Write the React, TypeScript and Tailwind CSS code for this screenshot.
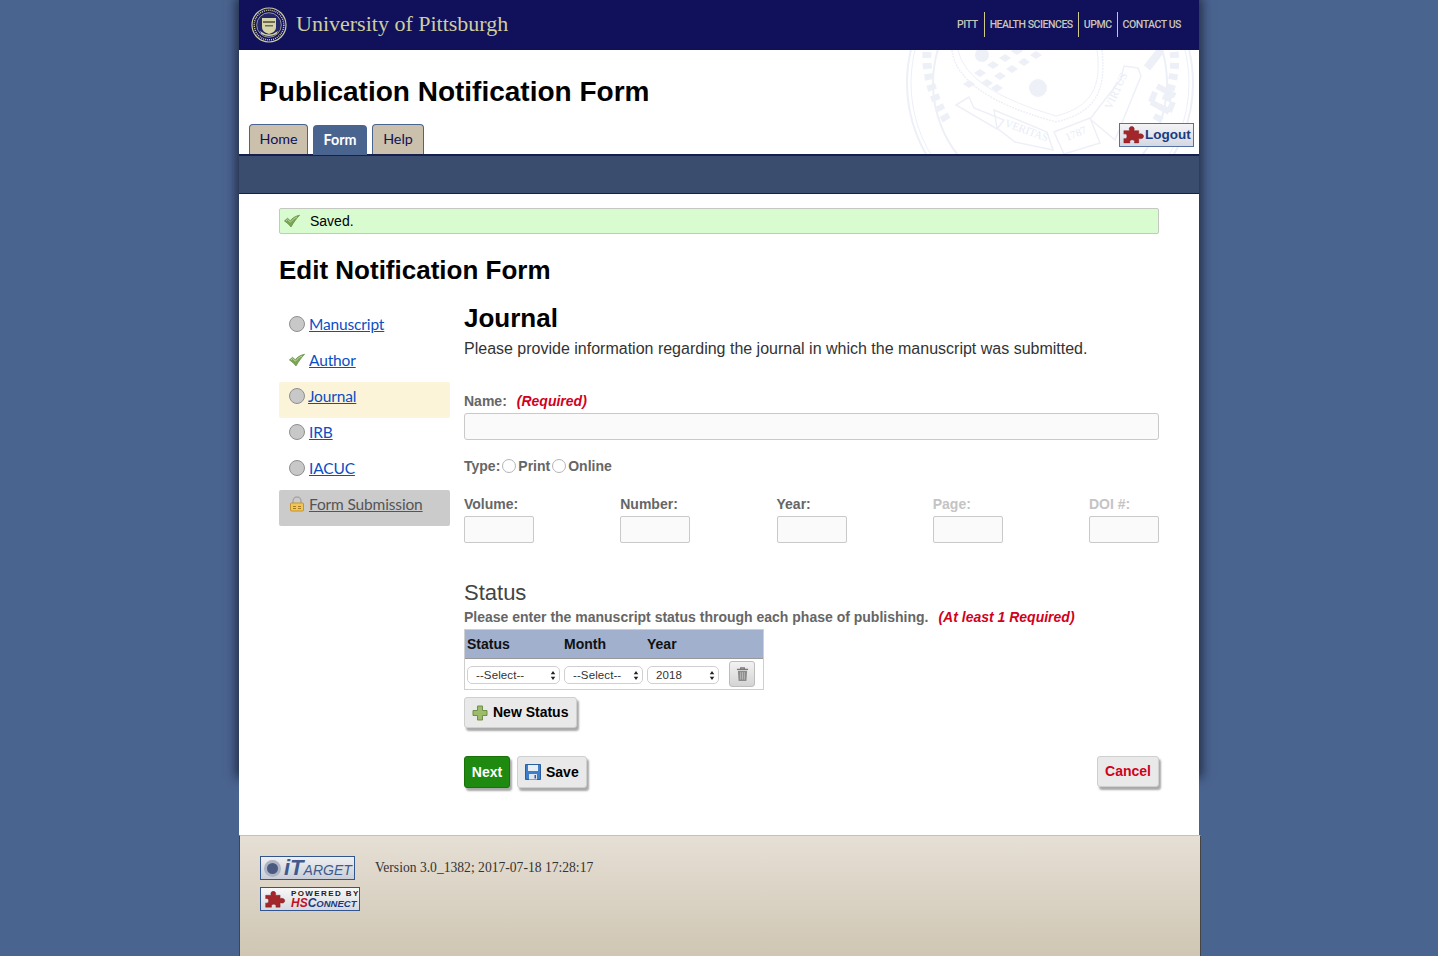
import React from "react";

const Puzzle = ({ className }: { className?: string }) => (
  <svg viewBox="0 0 24 20" className={className}>
    <path d="M1 5h6.500c-1.200-3 .6-4.600 2.500-4.600s3.700 1.600 2.500 4.600H18v4c3-1.200 5.500.3 5.500 2.500S21 15 18 13.800V19h-5c1-2.500-.7-3.500-2.500-3.500S7 16.500 8 19H1v-5c2.500 1 3.500-.7 3.500-2.500S3.500 8 1 9z" fill="#a3262b" stroke="#7c1a1e" strokeWidth=".5" />
  </svg>
);

const Check = ({ className }: { className?: string }) => (
  <svg viewBox="0 0 16 14" className={className}>
    <path d="M.4 6.900 3.600 4.300l2.600 2.400C8.500 4 11.500 2 15.600 1.200 12.500 4.500 9.500 8.500 7 13 5 10.500 3 8.500.4 6.900z" fill="#7aa653" stroke="#55803a" strokeWidth=".6" />
    <path d="M2 6.800 3.600 5.500l2.800 2.600C8.500 5.800 10.500 4 13 3" fill="none" stroke="#bfdc9f" strokeWidth=".9" />
  </svg>
);

const GreyDot = () => (
  <span className="w-4 h-4 rounded-full bg-[#c8c8c8] border border-[#8f8f8f] shrink-0" />
);

const Seal = () => (
  <svg viewBox="0 0 36 36" className="w-9 h-9">
    <circle cx="18" cy="18" r="17" fill="#10115a" stroke="#cfcda0" strokeWidth="1.200" />
    <circle cx="18" cy="18" r="14.800" fill="none" stroke="#cfcda0" strokeWidth="1.500" strokeDasharray="1 1" />
    <circle cx="18" cy="18" r="12.300" fill="#24266a" stroke="#cfcda0" strokeWidth=".7" />
    <path d="M11 11h14v9c0 4-3.500 6-7 7-3.500-1-7-3-7-7z" fill="#d6d4a6" />
    <path d="M12 14h12v2H12zM14 18h8v1.500h-8z" fill="#6d6c56" />
    <path d="M9 24q9 7 18 0l-1.500 3q-7.500 4-15 0z" fill="#d6d4a6" />
  </svg>
);

const Watermark = () => (
  <svg viewBox="0 0 300 104" className="w-[300px] h-[104px]" fill="none" stroke="#eef0f8">
    <circle cx="151" cy="33" r="143" strokeWidth="2" />
    <circle cx="151" cy="33" r="139" strokeWidth="1" />
    <circle cx="151" cy="33" r="117" strokeWidth="2" />
    <path d="M28 2q-2 34 22 72" strokeWidth="9" strokeDasharray="6 5" />
    <path d="M275 2q4 30-18 70" strokeWidth="9" strokeDasharray="6 5" />
    <path d="M53 0q5 45 104 72c40-10 50-30 46-72" strokeWidth="1.500" strokeDasharray="2 1" />
    <path d="M59 0q8 40 98 66c36-9 46-30 41-66" strokeWidth="1" />
    <g fill="#eef0f8" stroke="none">
      <circle cx="139" cy="38" r="9" />
      <circle cx="83" cy="5" r="7" />
      <path d="M75 23l6-4 6 4-6 4zM88 15l6-4 6 4-6 4zM100 8l6-4 6 4-6 4zM112 1l6-4 6 4-6 4zM82 33l6-4 6 4-6 4zM95 26l6-4 6 4-6 4zM107 19l6-4 6 4-6 4zM119 12l6-4 6 4-6 4zM131 5l6-4 6 4-6 4zM64 34l6-4 6 4-6 4zM92 38l6-4 6 4-6 4z" />
    </g>
    <path d="M57 55l13-8 5 11 30 12-7 9zM98 78l-3-18 53 22 6 18-38-8zM155 82l36-14 10 25-36 11zM191 69l31-40 3-13 14 2 3 8-26 64z" strokeWidth="1.500" />
    <g fill="#e9ecf6" stroke="none" fontFamily="'Liberation Serif',serif" fontSize="11">
      <text x="0" y="0" transform="translate(105 76) rotate(20)">VERITAS</text>
      <text x="0" y="0" transform="translate(168 91) rotate(-22)">1787</text>
      <text x="0" y="0" transform="translate(212 60) rotate(-65)">VIRTUS</text>
    </g>
    <path d="M258 36l18 10M252 52l18 10M256 42l-4 10M274 52l-4 10" strokeWidth="6" />
    <path d="M262 0l-14 18" strokeWidth="8" />
  </svg>
);

const Lock = () => (
  <svg viewBox="0 0 16 16" className="w-4 h-4 shrink-0">
    <path d="M4 8V5a4 4 0 0 1 8 0v3" fill="none" stroke="#a8a8a8" strokeWidth="1.500" />
    <rect x="1.500" y="7" width="13" height="8" rx="1" fill="#f0c659" stroke="#c7932c" />
    <path d="M4 10h3v1H4zm0 2h3v1H4zm5-2h3v1H9zm0 2h3v1H9z" fill="#a87a20" />
  </svg>
);

const Trash = () => (
  <svg viewBox="0 0 14 16" className="w-[13px] h-[16px]">
    <path d="M1 3h12M5 3V1.500h4V3" fill="none" stroke="#777" strokeWidth="1.300" />
    <path d="M2 4.500h10l-.8 11H2.800z" fill="#8b8b8b" />
    <path d="M5 6v8M7 6v8M9 6v8" stroke="#c5c5c5" strokeWidth=".8" />
  </svg>
);

const Plus = () => (
  <svg viewBox="0 0 16 16" className="w-4 h-4 shrink-0">
    <path d="M5.500 1h5v4.500H15v5h-4.500V15h-5v-4.500H1v-5h4.500z" fill="#9cbc6c" stroke="#6f8f47" />
  </svg>
);

const Floppy = () => (
  <svg viewBox="0 0 16 16" className="w-4 h-4 shrink-0">
    <path d="M.5.500h15v15H.5z" fill="#3f7fc7" stroke="#2a5e9f" />
    <path d="M3 1h10v6H3z" fill="#e8eef6" />
    <path d="M4 10h8v5.500H4z" fill="#dfe6f0" />
    <path d="M9.500 11h1.500v3.500H9.500z" fill="#2a5e9f" />
  </svg>
);

const Radio = () => (
  <span className="w-[14px] h-[14px] rounded-full bg-white border border-[#b5b5b5] inline-block shrink-0" />
);

const Select = ({ value, width }: { value: string; width: string }) => (
  <div className={`${width} h-[18px] flex items-center justify-between rounded-[5px] border border-[#d0d0d0] bg-white pl-[8px] pr-[3px] text-[11.500px] text-[#333]`}>
    <span className="mt-[1px] tracking-[0.1px]">{value}</span>
    <svg viewBox="0 0 6 10" className="w-[6px] h-[9px]"><path d="M3 0l2.500 3.500h-5zM3 10 .5 6.500h5z" fill="#222" /></svg>
  </div>
);

const Btn = ({ children, className }: { children: React.ReactNode; className: string }) => (
  <div className={`flex items-center rounded-[3px] border border-[#cfcfcf] bg-[#e9e9e9] shadow-[2px_3px_2px_#a9a9a9] text-sm font-bold ${className}`}>
    {children}
  </div>
);

const navItems: { label: string; className: string; icon: React.ReactNode; linkClass?: string }[] = [
  { label: "Manuscript", className: "h-[36px] items-center", icon: <GreyDot /> },
  { label: "Author", className: "h-[36px] items-center", icon: <Check className="w-4 h-4 shrink-0" /> },
  { label: "Journal", className: "h-[36px] mt-[4px] bg-[#fcf4d9] rounded-[2px] items-start pt-[6px]", icon: <GreyDot />, linkClass: "-ml-px -mt-[2px]" },
  { label: "IRB", className: "h-[36px] -mt-[4px] items-center", icon: <GreyDot /> },
  { label: "IACUC", className: "h-[36px] items-center", icon: <GreyDot /> },
  { label: "Form Submission", className: "h-[36px] mt-[4px] bg-[#cbcbcb] rounded-[2px] items-start pt-[6px]", icon: <Lock />, linkClass: "!text-[#555] -mt-[2px]" },
];

const fields = [
  { label: "Volume:", muted: false },
  { label: "Number:", muted: false },
  { label: "Year:", muted: false },
  { label: "Page:", muted: true },
  { label: "DOI #:", muted: true },
];

export default function App() {
  const sans = "font-['Liberation_Sans',Arial,sans-serif]";
  const pt = "font-['Lato',sans-serif]";
  return (
    <div className={`h-[956px] overflow-hidden bg-[#4a6490] ${sans}`}>
      <div className="w-[960px] ml-[239px] h-[775px] shadow-[0_0_10px_3px_rgba(20,25,45,0.75)]">
        <header className="h-[50px] bg-[#10115a] flex items-center justify-between pl-[12px] pr-[18px]">
          <div className="flex items-center gap-[9px]">
            <Seal />
            <span className="font-['Liberation_Serif',serif] text-[22px] text-[#cfcda0] leading-none -mt-[2px]">University of Pittsburgh</span>
          </div>
          <nav className="flex items-center font-['Roboto',sans-serif] font-medium text-[10.500px] tracking-[-0.45px] text-[#c9c6b9] -mt-[1px]">
            <span className="pr-[6px]">PITT</span>
            <span className="h-[25px] leading-[25px] border-l border-[#cfc98f] px-[5px]">HEALTH SCIENCES</span>
            <span className="h-[25px] leading-[25px] border-l border-[#cfc98f] px-[5px]">UPMC</span>
            <span className="h-[25px] leading-[25px] border-l border-[#cfc98f] pl-[5px]">CONTACT US</span>
          </nav>
        </header>

        <div className="relative h-[104px] bg-white px-[10px] flex flex-col justify-between">
          <div className="absolute right-0 top-0 pointer-events-none"><Watermark /></div>
          <h1 className="relative text-[28px] leading-[32px] font-bold text-black pl-[10px] pt-[26px]">Publication Notification Form</h1>
          <div className={`relative flex items-end gap-[5px] ${pt} text-[14.300px]`}>
            <div className="h-[30px] w-[59px] pb-[2px] flex items-center justify-center rounded-t-[4px] border border-b-0 border-[#4a6490] bg-[#cbc0ab] text-[#10115a]">Home</div>
            <div className="h-[30px] w-[54px] pb-[1px] flex items-center justify-center rounded-t-[4px] bg-[#4a6490] text-white font-bold translate-y-[1px]">Form</div>
            <div className="h-[30px] w-[52px] pb-[2px] flex items-center justify-center rounded-t-[4px] border border-b-0 border-[#4a6490] bg-[#cbc0ab] text-[#10115a]">Help</div>
          </div>
          <div className="absolute right-[5px] top-[73px] w-[75px] h-[24px] flex items-center gap-[1px] pl-[3px] border border-[#5570a5] bg-gradient-to-b from-[#f4f4f6] to-[#d4d8e2]">
            <Puzzle className="w-[21px] h-[18px] shrink-0" />
            <span className="text-[13.500px] font-bold text-[#1b3a80] leading-none">Logout</span>
          </div>
        </div>

        <div className="h-[40px] bg-[#3a4d6e] border-t-2 border-b border-t-[#161f4d] border-b-[#161f4d]" />

        <main className="h-[641px] bg-white px-[40px] pt-[14px]">
          <div className="h-[26px] flex items-center gap-[10px] pl-[4px] bg-[#d9fbd0] border border-[#c3c9bf] rounded-[2px] text-sm text-black">
            <Check className="w-4 h-4 shrink-0" />
            <span>Saved.</span>
          </div>
          <h2 className="text-[26px] leading-[30px] font-bold text-black mt-[21px]">Edit Notification Form</h2>

          <div className="flex mt-[21px]">
            <aside className={`w-[171px] mr-[14px] shrink-0 ${pt} text-[15.500px] tracking-[-0.15px]`}>
              {navItems.map((n) => (
                <div key={n.label} className={`flex gap-[4px] pl-[10px] ${n.className}`}>
                  {n.icon}
                  <span className={`underline text-[#0a4fc4] leading-[20px] ${n.linkClass ?? ""}`}>{n.label}</span>
                </div>
              ))}
            </aside>

            <section className="flex-1 min-w-0 -mt-[1px]">
              <h3 className="text-[26px] leading-[26px] font-bold text-black">Journal</h3>
              <p className="text-base leading-[20px] text-[#333] mt-[8px]">Please provide information regarding the journal in which the manuscript was submitted.</p>

              <div className="mt-[34px] text-sm font-bold leading-[16px] text-[#666]">
                Name:
                <span className="italic text-[#d0021b] ml-[10px]">(Required)</span>
              </div>
              <div className="h-[27px] mt-[4px] rounded-[3px] border border-[#c9c9c9] bg-[#fafafa]" />

              <div className="mt-[18px] flex items-center gap-[2px] text-sm font-bold leading-[16px] text-[#666]">
                <span>Type:</span><Radio /><span>Print</span><Radio /><span>Online</span>
              </div>

              <div className="mt-[22px] flex justify-between">
                {fields.map((f) => (
                  <div key={f.label}>
                    <div className={`text-sm font-bold leading-[16px] ${f.muted ? "text-[#c4c4c4]" : "text-[#666]"}`}>{f.label}</div>
                    <div className="w-[70px] h-[27px] mt-[4px] rounded-[2px] border border-[#c9c9c9] bg-[#fafafa]" />
                  </div>
                ))}
              </div>

              <h4 className="mt-[37px] text-[22px] leading-[26px] text-[#444]">Status</h4>
              <p className="mt-[3px] text-sm font-bold leading-[16px] text-[#666]">
                Please enter the manuscript status through each phase of publishing.
                <span className="italic text-[#d0021b] ml-[10px]">(At least 1 Required)</span>
              </p>

              <div className="w-[300px] mt-[4px] border border-[#cfcfcf]">
                <div className="h-[29px] bg-[#a0b0cd] border-b border-[#999] flex items-center text-sm font-bold text-[#111]">
                  <span className="w-[99px] pl-[2px]">Status</span>
                  <span className="w-[83px]">Month</span>
                  <span>Year</span>
                </div>
                <div className="h-[30px] flex items-center pl-[2px] pt-[2px]">
                  <Select value="--Select--" width="w-[93px] mr-[4px]" />
                  <Select value="--Select--" width="w-[79px] mr-[4px]" />
                  <Select value="2018" width="w-[72px] mr-[10px]" />
                  <div className="w-[26px] h-[26px] -mt-[2px] flex items-center justify-center rounded-[3px] border border-[#bdbdbd] bg-gradient-to-b from-[#f2f2f2] to-[#d4d4d4]"><Trash /></div>
                </div>
              </div>

              <Btn className="w-[113px] h-[31px] mt-[7px] pl-[7px] gap-[5px] text-black"><Plus /><span className="-mt-[2px]">New Status</span></Btn>

              <div className="mt-[28px] flex items-start">
                <div className="w-[46px] h-[32px] flex items-center justify-center rounded-[3px] bg-[#1e8a10] border border-[#187208] shadow-[2px_3px_2px_#a9a9a9] text-sm font-bold text-white">Next</div>
                <Btn className="ml-[7px] w-[70px] h-[32px] pl-[7px] gap-[5px] text-black"><Floppy /><span>Save</span></Btn>
                <Btn className="ml-auto w-[62px] h-[31px] pb-[2px] justify-center text-[#d0021b]">Cancel</Btn>
              </div>
            </section>
          </div>
        </main>
      </div>

      <footer className="relative mt-[60px] ml-[239px] w-[962px] h-[121px] border-x border-t border-x-[#444] border-t-[#c9bfae] bg-gradient-to-b from-[#e6dfd5] to-[#cfc6b3] pt-[20px] pl-[20px] flex items-start">
        <div className="flex flex-col gap-[7px]">
          <div className="w-[95px] h-[24px] flex items-center pl-[3px] gap-[3px] border border-[#33558f] bg-gradient-to-b from-[#f0f0f0] to-[#c9ced8]">
            <span className="w-[17px] h-[17px] rounded-full bg-[#4b5a80] border-[3px] border-[#aeb4c4] shrink-0" />
            <span className="italic text-[#3f5a8c] leading-none whitespace-nowrap"><span className="text-[22px] font-bold">iT</span><span className="text-[14px]">ARGET</span></span>
          </div>
          <div className="w-[100px] h-[24px] flex items-center pl-[3px] gap-[5px] border border-[#33558f] bg-gradient-to-b from-[#f8f8f8] to-[#d6d9e0]">
            <Puzzle className="w-[22px] h-[17px] shrink-0" />
            <div className="flex flex-col leading-none whitespace-nowrap">
              <span className="text-[8px] tracking-[1.400px] font-bold text-[#222]">POWERED BY</span>
              <span className="italic font-bold text-[12px] leading-[11px]"><span className="text-[#c1121f]">HS</span><span className="text-[#1b3a80]">C<span className="text-[9.500px]">ONNECT</span></span></span>
            </div>
          </div>
        </div>
        <span className="ml-[15px] mt-[4px] font-['Liberation_Serif',serif] text-[13.600px] leading-[16px] text-[#333]">Version 3.0_1382; 2017-07-18 17:28:17</span>
      </footer>
    </div>
  );
}
